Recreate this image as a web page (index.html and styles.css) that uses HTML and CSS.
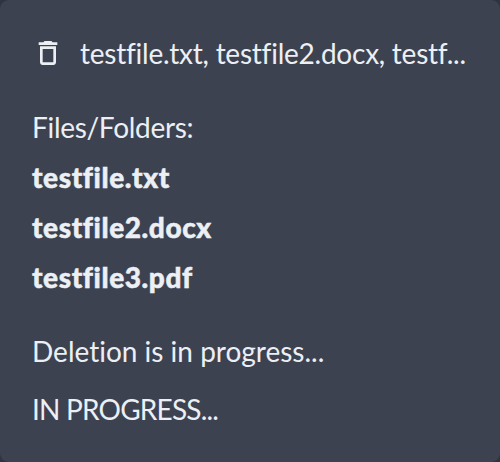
FILE: index.html
```
<!DOCTYPE html>
<html lang="en">
<head>
<meta charset="utf-8">
<title>Deletion</title>
<link rel="stylesheet" href="styles.css">
</head>
<body>
<main class="card">
  <header class="head">
    <svg class="icon" viewBox="0 0 24 24" aria-hidden="true"><path fill="currentColor" d="M6 19c0 1.100.9 2 2 2h8c1.100 0 2-.9 2-2V7H6v12zM8 9h8v10H8V9zm7.500-5-1-1h-5l-1 1H5v2h14V4h-3.500z"/></svg>
    <h1 class="title">testfile.txt, testfile2.docx, testf...</h1>
  </header>
  <p class="label">Files/Folders:</p>
  <ul class="files">
    <li>testfile.txt</li>
    <li>testfile2.docx</li>
    <li>testfile3.pdf</li>
  </ul>
  <p class="message">Deletion is in progress...</p>
  <p class="status">IN PROGRESS...</p>
</main>
</body>
</html>
```
FILE: styles.css
```
* { box-sizing: border-box; }
body { margin: 0; background: #2e3440; }
.card {
  height: 462px;
  padding: 28px 32px 0;
  border-radius: 9px;
  background: #3d4251;
  color: #eceff4;
  font: 400 28px/50px Lato, sans-serif;
  font-variant-ligatures: none;
  white-space: nowrap;
}
.head { display: flex; align-items: flex-start; height: 50px; }
.icon { width: 32px; height: 32px; margin: 9px 16px 0 0; flex: none; }
.title, .label, .files, .message, .status { margin: 0; font-size: 28px; font-weight: 400; }
.title { letter-spacing: -0.24px; }
.label { margin-top: 24px; letter-spacing: -0.3px; }
.files { padding: 0; list-style: none; }
.files li { height: 50px; font-weight: 900; letter-spacing: 0.6px; -webkit-text-stroke: 0.5px currentColor; }
.message { margin-top: 24px; letter-spacing: 0; }
.status { margin-top: 8px; letter-spacing: -0.8px; }
```
